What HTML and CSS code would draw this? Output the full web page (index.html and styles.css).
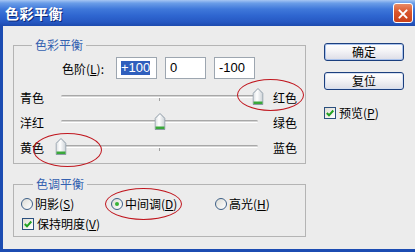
FILE: index.html
```html
<!DOCTYPE html>
<html lang="zh-CN">
<head>
    <meta charset="UTF-8">
    <title>色彩平衡</title>
    <link rel="stylesheet" href="styles.css">
</head>
<body>
    <div class="window">
        <div class="titlebar">
            <span class="title">色彩平衡</span>
            <span class="close">
                <svg width="20" height="20" viewBox="0 0 20 20">
                    <path d="M6 6 L14 14 M14 6 L6 14" stroke="#fff" stroke-width="2.2" stroke-linecap="round"/>
                </svg>
            </span>
        </div>

        <div class="frame">
            <div class="main">
                <!-- 色彩平衡 group -->
                <fieldset class="group color-group">
                    <legend>色彩平衡</legend>
                    <div class="level-row">
                        <span class="level-label">色阶(<u>L</u>):</span>
                        <div class="field"><span class="sel">+100</span></div>
                        <div class="field">0</div>
                        <div class="field">-100</div>
                    </div>

                    <div class="slider-row">
                        <span class="side-label">青色</span>
                        <div class="track with-tick">
                            <span class="thumb at-end">
                                <svg width="11" height="17" viewBox="0 0 11 17">
                                    <defs>
                                        <linearGradient id="tg1" x1="0" x2="1">
                                            <stop offset="0" stop-color="#d9dde0"/>
                                            <stop offset="0.4" stop-color="#ffffff"/>
                                            <stop offset="1" stop-color="#c9cfd4"/>
                                        </linearGradient>
                                    </defs>
                                    <path d="M0.5 5.5 L5.5 0.5 L10.5 5.5 V16.5 H0.5 Z" fill="url(#tg1)" stroke="#8d9aa6"/>
                                    <rect x="1" y="13.5" width="9" height="2.5" fill="#3aa83a"/>
                                </svg>
                            </span>
                        </div>
                        <span class="end-label">红色</span>
                    </div>

                    <div class="slider-row">
                        <span class="side-label">洋红</span>
                        <div class="track">
                            <span class="thumb at-mid">
                                <svg width="11" height="17" viewBox="0 0 11 17">
                                    <path d="M0.5 5.5 L5.5 0.5 L10.5 5.5 V16.5 H0.5 Z" fill="url(#tg1)" stroke="#8d9aa6"/>
                                    <rect x="1" y="13.5" width="9" height="2.5" fill="#3aa83a"/>
                                </svg>
                            </span>
                        </div>
                        <span class="end-label">绿色</span>
                    </div>

                    <div class="slider-row">
                        <span class="side-label">黄色</span>
                        <div class="track with-tick">
                            <span class="thumb at-start">
                                <svg width="11" height="17" viewBox="0 0 11 17">
                                    <path d="M0.5 5.5 L5.5 0.5 L10.5 5.5 V16.5 H0.5 Z" fill="url(#tg1)" stroke="#8d9aa6"/>
                                    <rect x="1" y="13.5" width="9" height="2.5" fill="#3aa83a"/>
                                </svg>
                            </span>
                        </div>
                        <span class="end-label">蓝色</span>
                    </div>
                </fieldset>

                <!-- 色调平衡 group -->
                <fieldset class="group tone-group">
                    <legend>色调平衡</legend>
                    <div class="radio-row">
                        <label class="radio"><span class="dot"></span>阴影(<u>S</u>)</label>
                        <label class="radio"><span class="dot on"></span>中间调(<u>D</u>)</label>
                        <label class="radio"><span class="dot"></span>高光(<u>H</u>)</label>
                    </div>
                    <label class="check keep">
                        <span class="box">
                            <svg width="10" height="10" viewBox="0 0 10 10"><path d="M1.8 5 L4 7.3 L8.3 2.5" fill="none" stroke="#21a121" stroke-width="2"/></svg>
                        </span>保持明度(<u>V</u>)
                    </label>
                </fieldset>
            </div>

            <div class="side">
                <button class="btn default">确定</button>
                <button class="btn">复位</button>
                <label class="check preview">
                    <span class="box">
                        <svg width="10" height="10" viewBox="0 0 10 10"><path d="M1.8 5 L4 7.3 L8.3 2.5" fill="none" stroke="#21a121" stroke-width="2"/></svg>
                    </span>预览(<u>P</u>)
                </label>
            </div>
        </div>

        <!-- red annotation circles -->
        <span class="mark mark-red"></span>
        <span class="mark mark-yellow"></span>
        <span class="mark mark-mid"></span>
    </div>
</body>
</html>
```

FILE: styles.css
```css
/* Dialog window */
body {
    margin: 0;
    font-family: "Noto Sans CJK SC", "Liberation Sans", sans-serif;
    font-size: 12px;
    color: #000;
    background: #ececec;
}

.window {
    position: relative;
    width: 415px;
    height: 252px;
    display: flex;
    flex-direction: column;
    overflow: hidden;
}

.titlebar {
    height: 26px;
    display: flex;
    align-items: center;
    justify-content: space-between;
    padding: 0 2px 0 5px;
    background: linear-gradient(to bottom, #a6c6f3 0%, #6a9de8 12%, #3f78da 35%, #2f66d0 60%, #2658c2 85%, #1d4aae 100%);
}

.title {
    color: #fff;
    font-size: 14px;
    font-weight: bold;
    letter-spacing: 0.5px;
    text-shadow: 1px 1px 0 #0d2a78;
}

.close {
    width: 20px;
    height: 20px;
    box-sizing: border-box;
    border: 1px solid #fff;
    border-radius: 3px;
    background: linear-gradient(to bottom, #e88a66 0%, #d9552c 45%, #c8401a 100%);
    display: flex;
}

.frame {
    flex: 1;
    display: flex;
    border-left: 3px solid #1c4cb2;
    border-bottom: 3px solid #1c4cb2;
    background: #ececec;
}

.main {
    padding: 12px 0 0 10px;
}

/* Group boxes */
.group {
    margin: 0;
    width: 293px;
    box-sizing: border-box;
    min-width: 0;
    border: 1px solid #b4b4b4;
    padding: 0;
}

.group legend {
    margin-left: 12px;
    padding: 0 3px;
    line-height: 14px;
    color: #3461b0;
}

.color-group {
    padding: 5px 0 3px 6px;
}

.level-row {
    display: flex;
    align-items: center;
    gap: 8px;
    height: 22px;
    margin-left: 42px;
}

.level-label {
    width: 48px;
    margin-right: -2px;
}

.field {
    width: 41px;
    height: 22px;
    box-sizing: border-box;
    border: 1px solid #9da6b0;
    background: #fff;
    padding-left: 4px;
    font-family: "Liberation Sans", sans-serif;
    font-size: 13px;
    line-height: 20px;
}

.sel {
    background: #2f5fbd;
    color: #fff;
    display: inline-block;
    line-height: 14px;
}

.slider-row {
    display: grid;
    grid-template-columns: 41px 197px auto;
    align-items: center;
    height: 25px;
}

.level-row + .slider-row {
    margin-top: 6px;
}

.end-label {
    margin-left: 15px;
}

.track {
    position: relative;
    height: 25px;
}

.track::before {
    content: "";
    position: absolute;
    left: 0;
    right: 0;
    top: 10px;
    height: 3px;
    box-sizing: border-box;
    border-top: 1px solid #a8a8a8;
    border-bottom: 1px solid #ffffff;
    background: #d4d4d4;
    border-radius: 2px;
}

.track.with-tick::after {
    content: "";
    position: absolute;
    left: 98px;
    top: 13px;
    width: 1px;
    height: 3px;
    background: #a0a0a0;
}

.thumb {
    position: absolute;
    top: 3px;
    width: 11px;
    height: 17px;
    transform: translateX(-50%);
    display: flex;
}

.thumb.at-start { left: 0; }
.thumb.at-mid { left: 50%; }
.thumb.at-end { left: 100%; }

.tone-group {
    margin-top: 13px;
    padding: 6px 0 5px 7px;
}

.radio-row {
    display: grid;
    grid-template-columns: 90px 104px auto;
    height: 14px;
    align-items: center;
}

.radio,
.check {
    display: flex;
    align-items: center;
    line-height: 14px;
}

.dot {
    width: 12px;
    height: 12px;
    box-sizing: border-box;
    border: 1px solid #3d5f86;
    border-radius: 50%;
    background: linear-gradient(135deg, #dcdcd6, #ffffff);
    margin-right: 2px;
    display: flex;
    align-items: center;
    justify-content: center;
}

.dot.on::after {
    content: "";
    width: 4px;
    height: 4px;
    border-radius: 50%;
    background: #36b336;
}

.box {
    width: 12px;
    height: 12px;
    box-sizing: border-box;
    border: 1px solid #2a4f7e;
    background: linear-gradient(135deg, #dedcd4, #ffffff);
    margin-right: 3px;
    display: flex;
}

.keep {
    margin-top: 6px;
    margin-left: 1px;
}

/* Buttons column */
.side {
    display: flex;
    flex-direction: column;
    align-items: flex-start;
    padding: 17px 0 0 18px;
}

.btn {
    width: 80px;
    height: 18px;
    padding: 0;
    border: 1px solid #1b3f7e;
    border-radius: 3px;
    font-family: inherit;
    font-size: 12px;
    line-height: 14px;
    color: #000;
    background: linear-gradient(to bottom, #ffffff 0%, #f3f3f6 45%, #dcdde6 100%);
    box-shadow: inset 0 0 0 1px #d6dff0;
}

.btn.default {
    box-shadow: inset 0 0 0 1px #a9c2ec;
}

.btn + .btn {
    margin-top: 11px;
}

.preview {
    margin-top: 16px;
}

/* Red hand-drawn circles over the dialog */
.mark {
    position: absolute;
    border: 1px solid #c0161e;
    border-radius: 50%;
}

.mark-red {
    left: 237px;
    top: 79px;
    width: 65px;
    height: 30px;
}

.mark-yellow {
    left: 33px;
    top: 133px;
    width: 67px;
    height: 32px;
}

.mark-mid {
    left: 105px;
    top: 188px;
    width: 75px;
    height: 30px;
}
```
